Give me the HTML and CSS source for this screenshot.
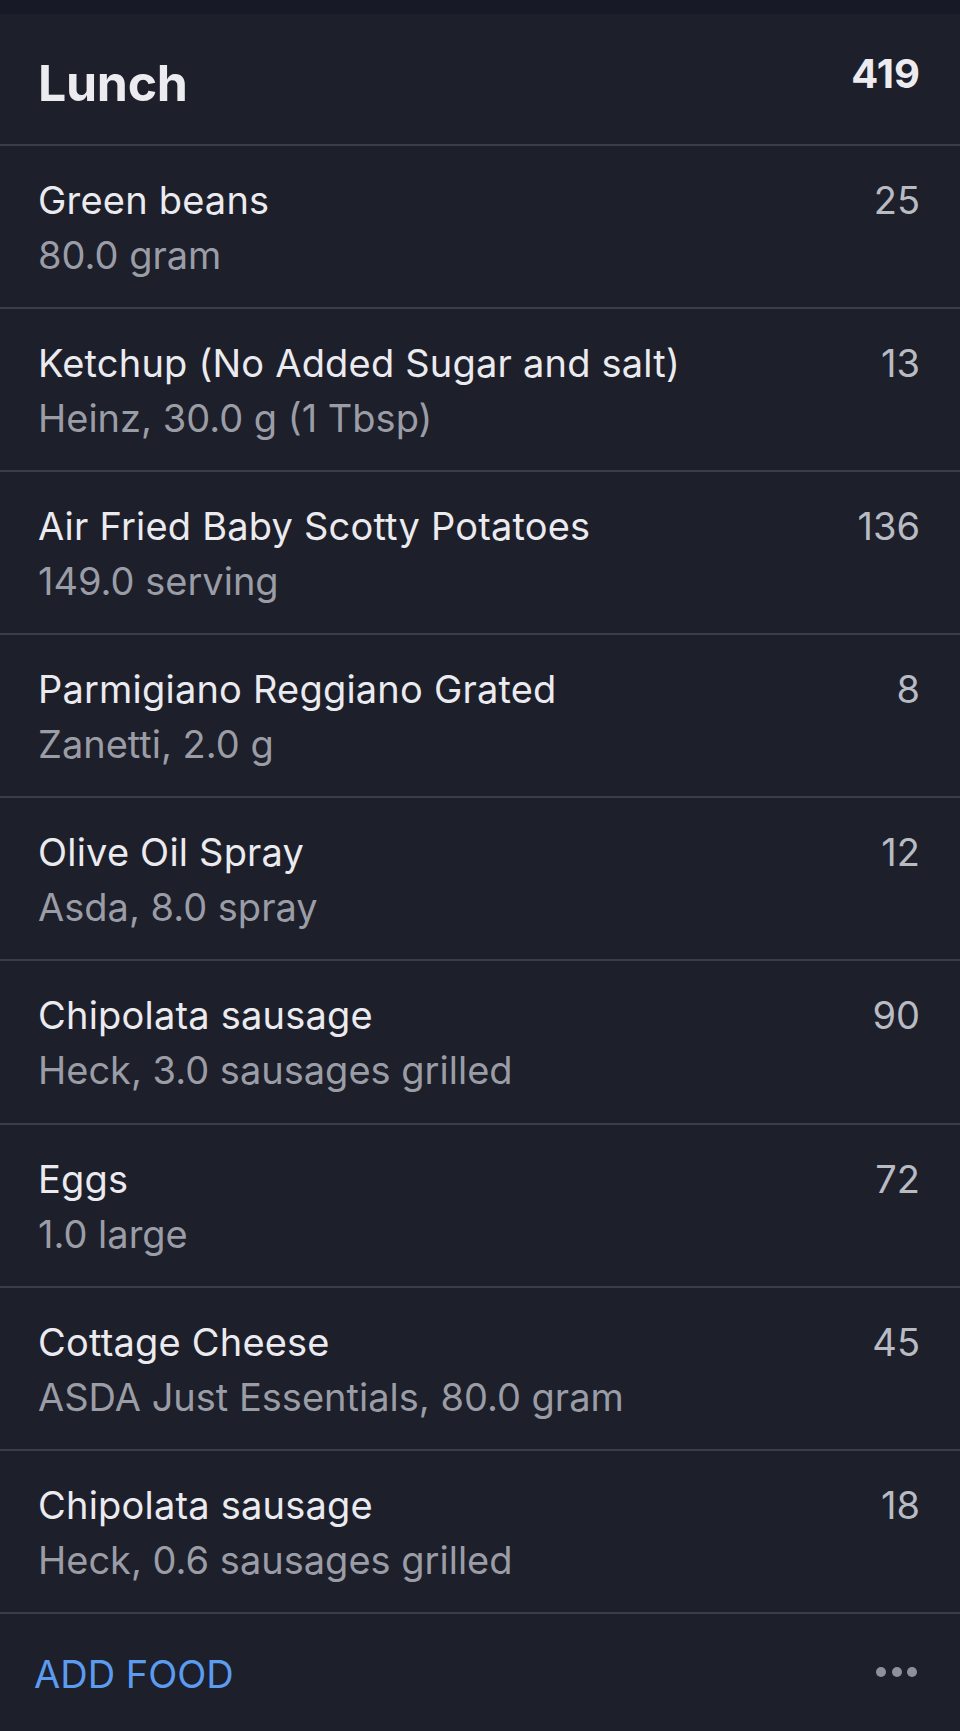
FILE: index.html
```html
<!DOCTYPE html>
<html lang="en">
<head>
<meta charset="utf-8">
<title>Lunch</title>
<link rel="stylesheet" href="styles.css">
</head>
<body>
<div class="topbar"></div>
<section class="meal">
  <header class="meal-head">
    <h1 class="meal-title">Lunch</h1>
    <span class="meal-total">419</span>
  </header>
  <ul class="food-list">
    <li class="food"><div class="food-text"><div class="food-name">Green beans</div><div class="food-detail">80.0 gram</div></div><span class="food-cal">25</span></li>
    <li class="food"><div class="food-text"><div class="food-name">Ketchup (No Added Sugar and salt)</div><div class="food-detail">Heinz, 30.0 g (1 Tbsp)</div></div><span class="food-cal">13</span></li>
    <li class="food"><div class="food-text"><div class="food-name">Air Fried Baby Scotty Potatoes</div><div class="food-detail">149.0 serving</div></div><span class="food-cal">136</span></li>
    <li class="food"><div class="food-text"><div class="food-name">Parmigiano Reggiano Grated</div><div class="food-detail">Zanetti, 2.0 g</div></div><span class="food-cal">8</span></li>
    <li class="food"><div class="food-text"><div class="food-name">Olive Oil Spray</div><div class="food-detail">Asda, 8.0 spray</div></div><span class="food-cal">12</span></li>
    <li class="food"><div class="food-text"><div class="food-name">Chipolata sausage</div><div class="food-detail">Heck, 3.0 sausages grilled</div></div><span class="food-cal">90</span></li>
    <li class="food"><div class="food-text"><div class="food-name">Eggs</div><div class="food-detail">1.0 large</div></div><span class="food-cal">72</span></li>
    <li class="food"><div class="food-text"><div class="food-name">Cottage Cheese</div><div class="food-detail">ASDA Just Essentials, 80.0 gram</div></div><span class="food-cal">45</span></li>
    <li class="food"><div class="food-text"><div class="food-name">Chipolata sausage</div><div class="food-detail">Heck, 0.6 sausages grilled</div></div><span class="food-cal">18</span></li>
  </ul>
  <footer class="meal-foot">
    <span class="add-food">ADD FOOD</span>
    <span class="more" aria-label="More"><i class="dot"></i><i class="dot"></i><i class="dot"></i></span>
  </footer>
</section>
</body>
</html>
```
FILE: styles.css
```css
* { box-sizing: border-box; }
html, body {
  margin: 0;
  padding: 0;
  background: #1d1f2b;
}
body {
  font-family: Inter, "Noto Sans", "Liberation Sans", sans-serif;
  color: #ebebef;
  height: 1731px;
  overflow: hidden;
}
.topbar {
  height: 14px;
  background: #171a26;
}
.meal-head {
  display: flex;
  justify-content: space-between;
  align-items: flex-start;
  height: 132px;
  padding: 39px 40px 0 38px;
  border-bottom: 2px solid #3b3e4a;
}
.meal-title {
  margin: 0;
  font-size: 50px;
  line-height: 60px;
  font-weight: 700;
  letter-spacing: -0.3px;
  color: #ececf0;
}
.meal-total {
  margin-top: -3px;
  font-size: 40px;
  line-height: 48px;
  font-weight: 700;
  color: #ececf0;
}
.food-list {
  list-style: none;
  margin: 0;
  padding: 0;
}
.food {
  display: flex;
  justify-content: space-between;
  align-items: flex-start;
  height: 163.1px;
  padding: 27px 40px 0 38px;
  border-bottom: 2px solid #3b3e4a;
}
.food-name,
.food-detail,
.food-cal {
  font-size: 38px;
  line-height: 55px;
  font-weight: 400;
  white-space: nowrap;
}
.food-name { color: #ebebef; letter-spacing: 0.2px; }
.food-detail { color: #9b9da6; }
.food-cal { color: #b9bbc3; }
.meal-foot {
  display: flex;
  justify-content: space-between;
  align-items: center;
  height: 117px;
  padding: 0 43px 0 34px;
}
.add-food {
  font-size: 38px;
  line-height: 46px;
  font-weight: 400;
  color: #5b9cf0;
  margin-top: 3px;
}
.more {
  display: flex;
  gap: 5.5px;
}
.dot {
  display: block;
  width: 10px;
  height: 10px;
  border-radius: 50%;
  background: #8e909a;
}
```
